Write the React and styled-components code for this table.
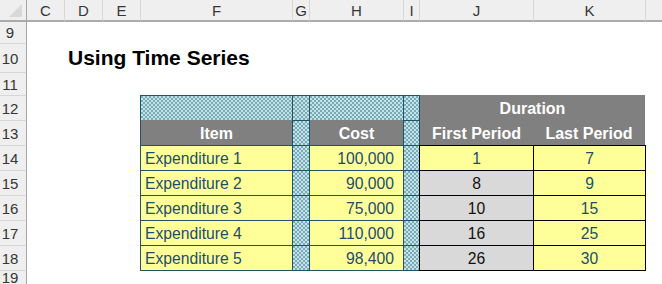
import styled, { createGlobalStyle, css } from 'styled-components';

const GlobalStyle = createGlobalStyle`
  html, body {
    margin: 0;
    padding: 0;
    background: #ffffff;
  }
  body {
    font-family: "Liberation Sans", Arial, sans-serif;
  }
`;

const TEAL = '#1f5466';
const INK = '#1d4d6b';

const columns = ['C', 'D', 'E', 'F', 'G', 'H', 'I', 'J', 'K', ''];

const Sheet = styled.div`
  display: grid;
  grid-template-columns: 27px 37px 38px 38px 152px 17px 94px 16px 114px 112px 17px;
  grid-template-rows: 22px 21px 29px 23px repeat(7, 25px) 14px;
  width: 662px;
  height: 284px;
  overflow: hidden;
  background: #ffffff;
`;

const Corner = styled.div`
  position: relative;
  background: #efefef;
  border-right: 1px solid #a6a6a6;
  border-bottom: 2px solid #ababab;
  box-sizing: border-box;

  svg {
    position: absolute;
    right: 4px;
    bottom: 3px;
  }
`;

const ColHead = styled.div`
  display: flex;
  align-items: center;
  justify-content: center;
  background: #efefef;
  border-bottom: 2px solid #ababab;
  border-left: ${({ $first }) => ($first ? 'none' : '1px solid #d6d6d6')};
  box-sizing: border-box;
  font-size: 15px;
  color: #363636;
`;

const RowHead = styled.div`
  display: flex;
  align-items: center;
  justify-content: center;
  padding-right: 6px;
  background: #efefef;
  border-right: 1px solid #a6a6a6;
  border-top: ${({ $top }) => ($top ? '1px solid #d6d6d6' : 'none')};
  box-sizing: border-box;
  font-size: 15px;
  color: #363636;
`;

const Blank = styled.div`
  grid-column: span ${({ $span }) => $span || 1};
`;

const Title = styled.div`
  grid-column: span 3;
  display: flex;
  align-items: flex-end;
  padding: 0 0 4px 4px;
  font-size: 21px;
  font-weight: 700;
  line-height: 1;
  color: #000;
  white-space: nowrap;
`;

// Excel's sparse dotted pattern on a pale blue fill
const fills = {
  dots: css`
    background-color: #c0e4ee;
    background-image: radial-gradient(circle at 1px 1px, #33676f 0.55px, transparent 0.85px),
      radial-gradient(circle at 1px 1px, #33676f 0.55px, transparent 0.85px);
    background-size: 4px 4px, 4px 4px;
    background-position: 0 0, 2px 2px;
  `,
  head: css`
    background: #808080;
    color: #ffffff;
    font-weight: 700;
    font-size: 16px;
  `,
  input: css`
    background: #ffff99;
    color: ${INK};
  `,
  calc: css`
    background: #d9d9d9;
    color: #111;
  `,
};

const Cell = styled.div`
  grid-column: span ${({ $span }) => $span || 1};
  display: flex;
  align-items: flex-end;
  justify-content: ${({ $align }) =>
    $align === 'right' ? 'flex-end' : $align === 'left' ? 'flex-start' : 'center'};
  padding: 0 ${({ $align }) => ($align === 'right' ? '9px' : '0')} 3px
    ${({ $align }) => ($align === 'left' ? '4px' : '0')};
  box-sizing: border-box;
  font-size: 15.7px;
  line-height: 1;
  white-space: nowrap;
  border-left: ${({ $left }) => ($left ? `1px solid ${$left}` : 'none')};
  border-top: ${({ $top }) => ($top ? `1px solid ${$top}` : 'none')};
  ${({ $fill }) => fills[$fill]}
  ${({ $edge, $bottom }) => {
    const shadows = [];
    if ($edge) shadows.push(`1px 0 0 ${$edge}`);
    if ($bottom) shadows.push(`0 1px 0 ${$bottom}`);
    if ($edge && $bottom) shadows.push(`1px 1px 0 ${$edge}`);
    return shadows.length ? `box-shadow: ${shadows.join(', ')};` : '';
  }}
`;

const expenses = [
  { item: 'Expenditure 1', cost: '100,000', first: 1, last: 7, firstCalc: false },
  { item: 'Expenditure 2', cost: '90,000', first: 8, last: 9, firstCalc: true },
  { item: 'Expenditure 3', cost: '75,000', first: 10, last: 15, firstCalc: true },
  { item: 'Expenditure 4', cost: '110,000', first: 16, last: 25, firstCalc: true },
  { item: 'Expenditure 5', cost: '98,400', first: 26, last: 30, firstCalc: true },
];

const CornerMark = () => (
  <svg width="13" height="13" viewBox="0 0 13 13">
    <polygon points="13,0 13,13 0,13" fill="#d8d8d8" />
  </svg>
);

const Lead = () => <Blank $span={3} />;

const App = () => {
  return (
    <>
      <GlobalStyle />
      <Sheet>
        <Corner>
          <CornerMark />
        </Corner>
        {columns.map((c, i) => (
          <ColHead key={i} $first={i === 0}>
            {c}
          </ColHead>
        ))}

        <RowHead>9</RowHead>
        <Blank $span={10} />

        <RowHead $top>10</RowHead>
        <Blank />
        <Title>Using Time Series</Title>
        <Blank $span={6} />

        <RowHead $top>11</RowHead>
        <Blank $span={10} />

        <RowHead $top>12</RowHead>
        <Lead />
        <Cell $fill="dots" $left={TEAL} $top={TEAL} />
        <Cell $fill="dots" $left={TEAL} $top={TEAL} />
        <Cell $fill="dots" $left={TEAL} $top={TEAL} />
        <Cell $fill="dots" $left={TEAL} $top={TEAL} />
        <Cell $fill="head" $span={2} $left={TEAL}>
          Duration
        </Cell>
        <Blank />

        <RowHead $top>13</RowHead>
        <Lead />
        <Cell $fill="head" $left={TEAL}>
          Item
        </Cell>
        <Cell $fill="dots" $left={TEAL} $top={TEAL} />
        <Cell $fill="head" $left={TEAL}>
          Cost
        </Cell>
        <Cell $fill="dots" $left={TEAL} $top={TEAL} />
        <Cell $fill="head" $left={TEAL}>
          First Period
        </Cell>
        <Cell $fill="head">Last Period</Cell>
        <Blank />

        {expenses.map((row, i) => {
          const end = i === expenses.length - 1;
          return [
            <RowHead key={`h${i}`} $top>
              {14 + i}
            </RowHead>,
            <Lead key={`l${i}`} />,
            <Cell key={`f${i}`} $fill="input" $align="left" $left={TEAL} $top={TEAL} $bottom={end && TEAL}>
              {row.item}
            </Cell>,
            <Cell key={`g${i}`} $fill="dots" $left={TEAL} $top={TEAL} $bottom={end && TEAL} />,
            <Cell key={`c${i}`} $fill="input" $align="right" $left={TEAL} $top={TEAL} $bottom={end && TEAL}>
              {row.cost}
            </Cell>,
            <Cell key={`i${i}`} $fill="dots" $left={TEAL} $top={TEAL} $bottom={end && TEAL} />,
            <Cell key={`j${i}`} $fill={row.firstCalc ? 'calc' : 'input'} $left="#000" $top="#000" $bottom={end && '#000'}>
              {row.first}
            </Cell>,
            <Cell key={`k${i}`} $fill="input" $left="#000" $top="#000" $edge="#000" $bottom={end && '#000'}>
              {row.last}
            </Cell>,
            <Blank key={`m${i}`} />,
          ];
        })}

        <RowHead $top>19</RowHead>
        <Blank $span={10} />
      </Sheet>
    </>
  );
};

export default App;
